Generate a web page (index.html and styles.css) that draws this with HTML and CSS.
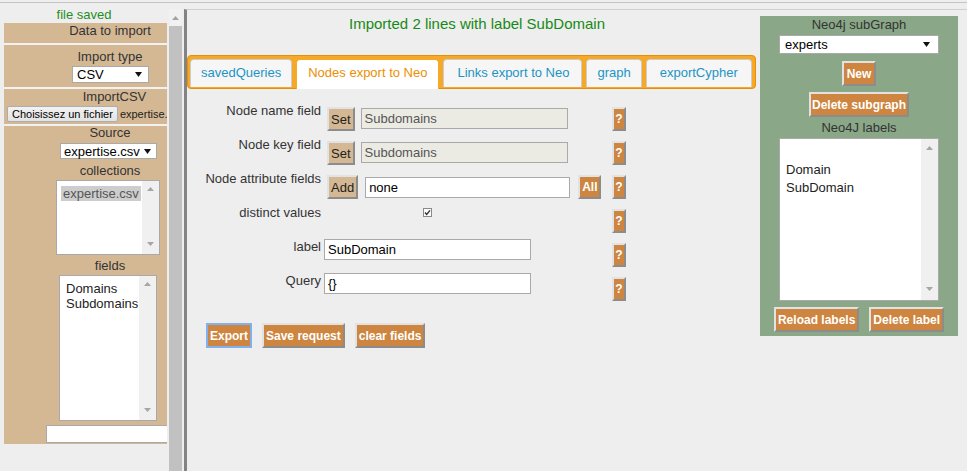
FILE: index.html
```html
<!DOCTYPE html>
<html>
<head>
<meta charset="utf-8">
<title>Import</title>
<link rel="stylesheet" href="styles.css">
</head>
<body>
<div class="page">
  <div class="left">
    <div class="status">file saved</div>
    <div class="tanclip">
      <div class="taninner">
        <div class="sec sec1">Data to import</div>
        <div class="sec sec2">
          <div class="lbl">Import type</div>
          <div class="sel sel-type"><span>CSV</span><svg class="arrow" width="7" height="5" viewBox="0 0 7 5"><polygon points="0,0 7,0 3.5,5" fill="#111"/></svg></div>
        </div>
        <div class="sec sec3">
          <div class="lbl lbl-csv">ImportCSV</div>
          <div class="filerow"><span class="filebtn">Choisissez un fichier</span><span class="filename">expertise.</span></div>
        </div>
        <div class="sec sec4">
          <div class="lbl lbl14">Source</div>
          <div class="sel sel-source"><span>expertise.csv</span><svg class="arrow" width="7" height="5" viewBox="0 0 7 5"><polygon points="0,0 7,0 3.5,5" fill="#111"/></svg></div>
          <div class="lbl lbl14 lbl-coll">collections</div>
          <div class="listbox lb-coll">
            <div class="lb-items"><div class="lb-item selected">expertise.csv</div></div>
            <div class="lb-scroll">
              <svg width="7" height="4" viewBox="0 0 7 4"><polygon points="0,4 3.5,0 7,4" fill="#a6a6a6"/></svg>
              <svg width="7" height="4" viewBox="0 0 7 4"><polygon points="0,0 7,0 3.5,4" fill="#a6a6a6"/></svg>
            </div>
          </div>
          <div class="lbl lbl14 lbl-fields">fields</div>
          <div class="listbox lb-fields">
            <div class="lb-items">
              <div class="lb-item">Domains</div>
              <div class="lb-item">Subdomains</div>
            </div>
            <div class="lb-scroll">
              <svg width="7" height="4" viewBox="0 0 7 4"><polygon points="0,4 3.5,0 7,4" fill="#a6a6a6"/></svg>
              <svg width="7" height="4" viewBox="0 0 7 4"><polygon points="0,0 7,0 3.5,4" fill="#a6a6a6"/></svg>
            </div>
          </div>
          <div class="bottominput"></div>
        </div>
      </div>
    </div>
  </div>

  <div class="vscroll">
    <div class="vs-up"><svg width="7" height="4" viewBox="0 0 7 4"><polygon points="0,4 3.5,0 7,4" fill="#a3a3a3"/></svg></div>
  </div>

  <div class="main">
    <div class="content">
      <div class="msg">Imported 2 lines with label SubDomain</div>
      <div class="tabs">
        <div class="tab">savedQueries</div>
        <div class="tab tab-nodes active">Nodes export to Neo</div>
        <div class="tab tab-links">Links export to Neo</div>
        <div class="tab">graph</div>
        <div class="tab tab-cypher">exportCypher</div>
      </div>

      <div class="form">
        <div class="flabel">Node name field</div>
        <div class="ctrl">
          <button class="btn btn-tan btn-set">Set</button>
          <input class="fld fld-dis fld-set" value="Subdomains" readonly>
        </div>
        <button class="btn help">?</button>

        <div class="flabel">Node key field</div>
        <div class="ctrl">
          <button class="btn btn-tan btn-set">Set</button>
          <input class="fld fld-dis fld-set" value="Subdomains" readonly>
        </div>
        <button class="btn help">?</button>

        <div class="flabel">Node attribute fields</div>
        <div class="ctrl">
          <button class="btn btn-tan btn-set">Add</button>
          <input class="fld fld-attr" value="none" readonly>
          <button class="btn btn-all">All</button>
        </div>
        <button class="btn help">?</button>

        <div class="flabel">distinct values</div>
        <div class="ctrl">
          <span class="check"><svg width="9" height="9" viewBox="0 0 9 9"><rect x="0.5" y="0.5" width="8" height="8" fill="#fdfdfd" stroke="#8a8a8a"/><path d="M2 4.6 L3.7 6.4 L7 2.4" fill="none" stroke="#333" stroke-width="1.4"/></svg></span>
        </div>
        <button class="btn help">?</button>

        <div class="flabel">label</div>
        <div class="ctrl">
          <input class="fld fld-wide" value="SubDomain" readonly>
        </div>
        <button class="btn help">?</button>

        <div class="flabel">Query</div>
        <div class="ctrl">
          <input class="fld fld-wide" value="{}" readonly>
        </div>
        <button class="btn help">?</button>
      </div>

      <div class="actions">
        <button class="btn btn-focus">Export</button>
        <button class="btn">Save request</button>
        <button class="btn">clear fields</button>
      </div>
    </div>

    <div class="neo">
      <div class="neo-lbl">Neo4j subGraph</div>
      <div class="sel sel-graph"><span>experts</span><svg class="arrow" width="7" height="5" viewBox="0 0 7 5"><polygon points="0,0 7,0 3.5,5" fill="#111"/></svg></div>
      <button class="btn btn-new">New</button>
      <button class="btn btn-delsub">Delete subgraph</button>
      <div class="neo-lbl neo-lbl2">Neo4J labels</div>
      <div class="listbox lb-labels">
        <div class="lb-items">
          <div class="lb-item empty"></div>
          <div class="lb-item">Domain</div>
          <div class="lb-item">SubDomain</div>
        </div>
        <div class="lb-scroll">
          <svg width="7" height="4" viewBox="0 0 7 4"><polygon points="0,4 3.5,0 7,4" fill="#a6a6a6"/></svg>
          <svg width="7" height="4" viewBox="0 0 7 4"><polygon points="0,0 7,0 3.5,4" fill="#a6a6a6"/></svg>
        </div>
      </div>
      <div class="neo-btns">
        <button class="btn">Reload labels</button>
        <button class="btn">Delete label</button>
      </div>
    </div>
  </div>
</div>
</body>
</html>
```

FILE: styles.css
```css
* { box-sizing: border-box; }
html, body { margin: 0; padding: 0; }
body {
  background: #eeeeee;
  font-family: "Liberation Sans", Arial, sans-serif;
  font-size: 13px;
  color: #333;
  width: 967px;
  height: 471px;
  overflow: hidden;
}

.page {
  display: flex;
  margin-top: 2px;
  border-top: 1px solid #c4c4c4;
  height: 469px;
}

/* ---------- left column ---------- */
.left { width: 168px; flex: none; }
.status {
  height: 20px;
  padding-top: 4px;
  line-height: 16px;
  text-align: center;
  color: #1f8f1f;
}
.tanclip {
  margin-left: 4px;
  width: 163px;
  height: 421px;
  overflow: hidden;
}
.taninner { width: 212px; }
.sec {
  background: #d4b893;
  border-bottom: 2px solid #f2f2f2;
  text-align: center;
  color: #333;
}
.lbl { line-height: 16px; }
.lbl14 { line-height: 14px; }
.sec1 { height: 22px; line-height: 16px; }
.sec2 { height: 44px; padding-top: 4px; }
.sec3 { height: 37px; }
.lbl-csv { padding-left: 9px; }
.sec4 { height: 330px; }

.sel {
  display: flex;
  align-items: center;
  justify-content: space-between;
  background: #fff;
  border: 1px solid #a9a9a9;
  color: #000;
  text-align: left;
  font-size: 13px;
  white-space: nowrap;
}
.sel-type { width: 77px; height: 17px; margin: 1px 0 0 68px; padding: 0 6px 0 4px; }
.sel-source { width: 97px; height: 16px; margin: 3px 0 0 56px; padding: 0 5px 0 3px; }

.filerow {
  display: flex;
  align-items: center;
  margin: 1px 0 0 3px;
  text-align: left;
  white-space: nowrap;
}
.filebtn {
  height: 16px;
  line-height: 14px;
  padding: 0 4px;
  font-size: 11px;
  color: #000;
  background: linear-gradient(#f2f2f2, #e3e3e3);
  border: 1px solid #adadad;
  border-radius: 2px;
}
.filename { margin-left: 2px; font-size: 11px; color: #222; }

.lbl-coll { margin-top: 5px; }
.lbl-fields { margin-top: 4px; }

.listbox {
  display: flex;
  background: #fff;
  border: 1px solid #a9a9a9;
  text-align: left;
}
.lb-items { flex: 1; }
.lb-item { line-height: 15px; color: #222; white-space: nowrap; }
.lb-scroll {
  width: 17px;
  flex: none;
  background: #f0f0f0;
  display: flex;
  flex-direction: column;
  justify-content: space-between;
  align-items: center;
  padding: 6px 0 8px;
}
.lb-coll { width: 104px; height: 75px; margin: 2px 0 0 52px; }
.lb-coll .lb-items { padding: 5px 0 0 4px; }
.lb-item.selected {
  display: inline-block;
  background: #cdcdcd;
  color: #555;
  padding: 0 2px;
}
.lb-fields { width: 98px; height: 146px; margin: 2px 0 0 55px; }
.lb-fields .lb-items { padding: 5px 0 0 6px; }
.bottominput {
  width: 170px;
  height: 18px;
  margin: 4px 0 0 42px;
  background: #fff;
  border: 1px solid #a9a9a9;
}

/* ---------- divider scrollbar ---------- */
.vscroll {
  width: 13px;
  flex: none;
  margin-left: 1px;
  margin-top: 6px;
  background: #c1c1c1;
}
.vs-up {
  height: 17px;
  background: #f1f1f1;
  display: flex;
  align-items: center;
  justify-content: center;
}

/* ---------- main ---------- */
.main {
  flex: 1;
  margin-left: 2px;
  margin-top: 6px;
  border-top: 1px solid #cfcfcf;
  border-left: 3px solid #838383;
  display: flex;
  align-items: flex-start;
}
.content { width: 569px; flex: none; }
.msg {
  padding-top: 5px;
  padding-left: 11px;
  line-height: 18px;
  font-size: 15px;
  color: #168a16;
  text-align: center;
}

.tabs {
  display: flex;
  align-items: flex-start;
  gap: 4px;
  margin-top: 22px;
  background: #f6a828;
  border: 1px solid #e78f08;
  border-radius: 4px;
  padding: 3px 5px 1px 2px;
}
.tab {
  height: 28px;
  line-height: 26px;
  padding: 0 10px;
  background: #f6f6f6;
  border: 1px solid #cccccc;
  border-bottom: none;
  border-radius: 4px 4px 0 0;
  color: #1c94c4;
  white-space: nowrap;
}
.tab-nodes { padding: 0 11px; }
.tab-links { padding: 0 12px 0 13px; }
.tab-cypher { padding: 0 13px; }
.tab.active {
  height: 30px;
  margin-bottom: -2px;
  background: #ffffff;
  border-color: #f6a828;
  color: #eb8f00;
}

.form {
  display: grid;
  grid-template-columns: 118px 290px 14px;
  grid-auto-rows: 34px;
  margin-top: 18px;
  padding-left: 17px;
}
.flabel {
  text-align: right;
  padding-right: 1px;
  line-height: 16px;
  margin-top: -4px;
  color: #333;
  white-space: nowrap;
}
.ctrl { display: flex; align-items: flex-start; }

.btn {
  font-family: "Liberation Sans", Arial, sans-serif;
  font-weight: bold;
  font-size: 12px;
  color: #fff;
  background: #cd853f;
  border: 2px solid;
  border-color: #e2e2e2 #8c8c8c #8c8c8c #e2e2e2;
  border-radius: 0;
  height: 25px;
  padding: 0 2px;
  margin: 0;
  white-space: nowrap;
  line-height: 1;
}
.btn-tan {
  background: #d4b893;
  color: #222;
  font-weight: normal;
  font-size: 13px;
  height: 24px;
  padding: 0 2px;
}
.btn-set { margin-left: 5px; }
.btn-all { margin-left: 8px; height: 24px; padding: 0 2px; }
.help { width: 14px; height: 24px; padding: 0; }
.btn-focus { border-color: #82b0ee; }

.fld {
  height: 21px;
  border: 1px solid #a9a9a9;
  background: #fff;
  padding: 0 3px;
  margin: 0;
  font-family: "Liberation Sans", Arial, sans-serif;
  font-size: 13px;
  color: #000;
  outline: none;
}
.fld-dis { background: #ebebe4; color: #555; }
.fld-set { width: 207px; margin-left: 6px; margin-top: 1px; }
.fld-attr { width: 205px; margin-left: 7px; margin-top: 2px; }
.fld-wide { width: 207px; margin-left: 2px; margin-top: -4px; }
.check { display: block; margin-left: 101px; margin-top: -1px; height: 9px; }
.check svg { display: block; }

.actions {
  display: flex;
  gap: 10px;
  margin-top: 12px;
  padding-left: 19px;
}

/* ---------- neo panel ---------- */
.neo {
  width: 198px;
  flex: none;
  margin-left: 4px;
  margin-top: 6px;
  background: #8aa888;
  display: flex;
  flex-direction: column;
  align-items: center;
  padding: 1px 0 4px;
  color: #333;
}
.neo-lbl { line-height: 16px; }
.neo-lbl2 { margin-top: 3px; }
.sel-graph { width: 160px; height: 19px; margin-top: 2px; padding: 0 8px 0 5px; }
.btn-new { margin-top: 7px; padding: 0 3px; }
.btn-delsub { margin-top: 6px; padding: 0 1px; }
.lb-labels { width: 160px; height: 163px; margin-top: 2px; }
.lb-labels .lb-items { padding: 4px 0 0 6px; }
.lb-labels .lb-item { line-height: 18px; }
.lb-labels .lb-item.empty { height: 18px; }
.lb-labels .lb-scroll { padding: 7px 0 9px; }
.neo-btns { display: flex; gap: 10px; margin-top: 6px; }
```
